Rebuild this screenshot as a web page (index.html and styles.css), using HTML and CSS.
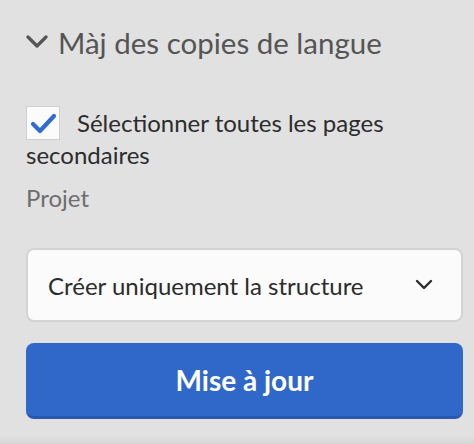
FILE: index.html
```html
<!DOCTYPE html>
<html lang="fr">
<head>
<meta charset="utf-8">
<link rel="stylesheet" href="styles.css">
</head>
<body>
<div class="panel">
  <div class="title">
    <svg class="title-chevron" width="22" height="14" viewBox="0 0 22 14"><path d="M2 2 L11 11 L20 2" fill="none" stroke="#555" stroke-width="3.2" stroke-linecap="round" stroke-linejoin="round"/></svg>
    <span>Màj des copies de langue</span>
  </div>
  <div class="check-row">
    <span class="checkbox"><svg width="32" height="32" viewBox="0 0 32 32"><path d="M6 17 L13 24 L27 9" fill="none" stroke="#2f6bd0" stroke-width="4.2" stroke-linecap="round" stroke-linejoin="round"/></svg></span><span class="check-label">Sélectionner toutes les pages secondaires</span>
  </div>
  <div class="label">Projet</div>
  <div class="select">
    <span>Créer uniquement la structure</span>
    <svg width="18" height="12" viewBox="0 0 18 12"><path d="M2 2 L9 9 L16 2" fill="none" stroke="#2c2c2c" stroke-width="2.4" stroke-linecap="round" stroke-linejoin="round"/></svg>
  </div>
  <button class="update">Mise à jour</button>
</div>
<div class="bottom-shadow"></div>
</body>
</html>
```
FILE: styles.css
```css
html, body {
  margin: 0;
  padding: 0;
  background: #e1e1e1;
  width: 474px;
  height: 444px;
  overflow: hidden;
}
body {
  font-family: Lato, "Open Sans", sans-serif;
  position: relative;
}
.panel {
  padding: 20px 11px 0 26px;
}
.title {
  display: flex;
  align-items: center;
  gap: 10px;
  height: 44px;
  color: #555555;
  font-size: 29.5px;
}
.title-chevron {
  flex: none;
}
.check-row {
  margin-top: 42px;
  font-size: 24px;
  line-height: 30px;
  color: #2c2c2c;
}
.checkbox {
  display: inline-block;
  width: 32px;
  height: 32px;
  background: #fbfbfb;
  border: 1px solid #cfcfcf;
  vertical-align: -8px;
  margin-right: 17px;
}
.checkbox svg {
  display: block;
}
.label {
  margin-top: 12px;
  font-size: 24px;
  line-height: 32px;
  color: #6e6e6e;
}
.select {
  margin-top: 34px;
  height: 74px;
  box-sizing: border-box;
  background: #fbfbfb;
  border: 2px solid #d3d3d3;
  border-radius: 8px;
  display: flex;
  align-items: center;
  justify-content: space-between;
  padding: 0 28px 0 20px;
  font-size: 24px;
  color: #2c2c2c;
}
.update {
  margin-top: 21px;
  display: block;
  width: 100%;
  height: 76px;
  box-sizing: border-box;
  background: #3068c9;
  border: none;
  border-bottom: 3px solid #2858b3;
  border-radius: 8px;
  color: #ffffff;
  font-family: Lato, "Open Sans", sans-serif;
  font-weight: bold;
  font-size: 28px;
  padding: 0;
}
.bottom-shadow {
  position: absolute;
  left: 0;
  right: 0;
  bottom: 0;
  height: 8px;
  background: linear-gradient(#e1e1e1, #d6d6d6);
}
```
